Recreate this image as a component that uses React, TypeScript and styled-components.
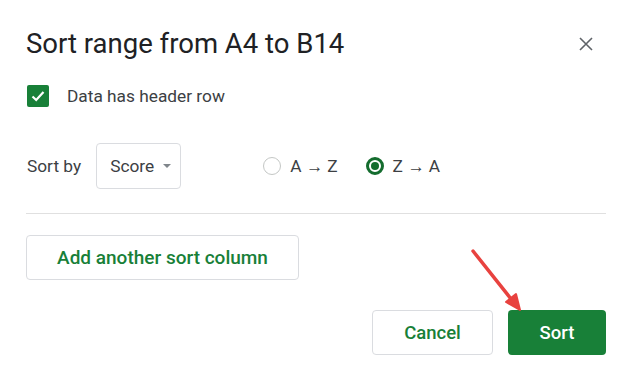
import React from 'react';
import styled, { createGlobalStyle } from 'styled-components';

const GlobalStyle = createGlobalStyle`
    html, body {
        margin: 0;
        padding: 0;
        background: #fff;
    }
    body {
        font-family: Roboto, "Liberation Sans", Arial, sans-serif;
        color: #3c4043;
    }
`;

const Dialog = styled.div`
    position: relative;
    width: 631px;
    height: 380px;
    box-sizing: border-box;
    padding: 28px 25px 0 26px;
    display: flex;
    flex-direction: column;
`;

const Header = styled.div`
    display: flex;
    justify-content: space-between;
    align-items: center;
`;

const Title = styled.h1`
    margin: 0;
    font-size: 27.5px;
    font-weight: 400;
    color: #202124;
    line-height: 32px;
`;

const CloseButton = styled.button`
    border: none;
    background: none;
    padding: 0;
    margin-right: 11px;
    width: 18px;
    height: 18px;
    display: flex;
    align-items: center;
    justify-content: center;
`;

const CheckRow = styled.label`
    display: flex;
    align-items: center;
    gap: 18px;
    margin-top: 25px;
    margin-left: 1px;
    font-size: 17.3px;
`;

const CheckBox = styled.span`
    width: 22px;
    height: 22px;
    border-radius: 2px;
    background: #188038;
    display: flex;
    align-items: center;
    justify-content: center;
`;

const SortRow = styled.div`
    display: flex;
    align-items: center;
    margin-top: 36px;
    padding-bottom: 24px;
    border-bottom: 1px solid #e0e0e0;
    font-size: 17.3px;
`;

const SortLabel = styled.span`
    margin-left: 1px;
    margin-right: 15px;
`;

const Select = styled.div`
    width: 85px;
    height: 46px;
    box-sizing: border-box;
    border: 1px solid #dadce0;
    border-radius: 4px;
    display: flex;
    align-items: center;
    padding-left: 13px;
    gap: 9px;
    margin-right: 82px;
`;

const Caret = styled.span`
    width: 0;
    height: 0;
    border-left: 4px solid transparent;
    border-right: 4px solid transparent;
    border-top: 4px solid #80868b;
`;

const RadioOption = styled.label`
    display: flex;
    align-items: center;
    gap: 9px;
    margin-right: 28px;
`;

const Radio = styled.span<{ $checked?: boolean }>`
    width: 18px;
    height: 18px;
    box-sizing: border-box;
    border-radius: 50%;
    border: ${p => (p.$checked ? '3px solid #146c2e' : '1px solid #c4c7c5')};
    display: flex;
    align-items: center;
    justify-content: center;
    &::after {
        content: '';
        display: ${p => (p.$checked ? 'block' : 'none')};
        width: 8px;
        height: 8px;
        border-radius: 50%;
        background: #146c2e;
    }
`;

const AddButton = styled.button`
    align-self: flex-start;
    margin-top: 21px;
    width: 273px;
    height: 45px;
    background: #fff;
    border: 1px solid #dadce0;
    border-radius: 4px;
    color: #188038;
    font-family: inherit;
    font-size: 19px;
    font-weight: 500;
`;

const Footer = styled.div`
    display: flex;
    justify-content: flex-end;
    gap: 15px;
    margin-top: 30px;
`;

const Button = styled.button<{ $primary?: boolean }>`
    height: 45px;
    width: ${p => (p.$primary ? '98px' : '121px')};
    border-radius: 4px;
    border: ${p => (p.$primary ? 'none' : '1px solid #dadce0')};
    background: ${p => (p.$primary ? '#188038' : '#fff')};
    color: ${p => (p.$primary ? '#fff' : '#188038')};
    font-family: inherit;
    font-size: 18.5px;
    font-weight: 500;
`;

const Arrow = styled.svg`
    position: absolute;
    left: 460px;
    top: 240px;
    pointer-events: none;
`;

const App = () => (
    <>
        <GlobalStyle />
        <Dialog>
            <Header>
                <Title>Sort range from A4 to B14</Title>
                <CloseButton aria-label="Close">
                    <svg width="14" height="14" viewBox="0 0 14 14">
                        <path d="M1 1L13 13M13 1L1 13" stroke="#5f6368" strokeWidth="1.6" />
                    </svg>
                </CloseButton>
            </Header>
            <CheckRow>
                <CheckBox>
                    <svg width="16" height="16" viewBox="0 0 16 16">
                        <path d="M2.5 8.5L6.2 12L13.5 4" fill="none" stroke="#fff" strokeWidth="2.2" />
                    </svg>
                </CheckBox>
                Data has header row
            </CheckRow>
            <SortRow>
                <SortLabel>Sort by</SortLabel>
                <Select>
                    Score
                    <Caret />
                </Select>
                <RadioOption>
                    <Radio />
                    A → Z
                </RadioOption>
                <RadioOption>
                    <Radio $checked />
                    Z → A
                </RadioOption>
            </SortRow>
            <AddButton>Add another sort column</AddButton>
            <Footer>
                <Button>Cancel</Button>
                <Button $primary>Sort</Button>
            </Footer>
            <Arrow width="70" height="75" viewBox="0 0 70 75">
                <path d="M13 11L55 64" stroke="#e8423f" strokeWidth="3.5" strokeLinecap="round" />
                <path d="M60 70L46 62L56 54Z" fill="#e8423f" stroke="#e8423f" strokeWidth="2" strokeLinejoin="round" />
            </Arrow>
        </Dialog>
    </>
);

export default App;
